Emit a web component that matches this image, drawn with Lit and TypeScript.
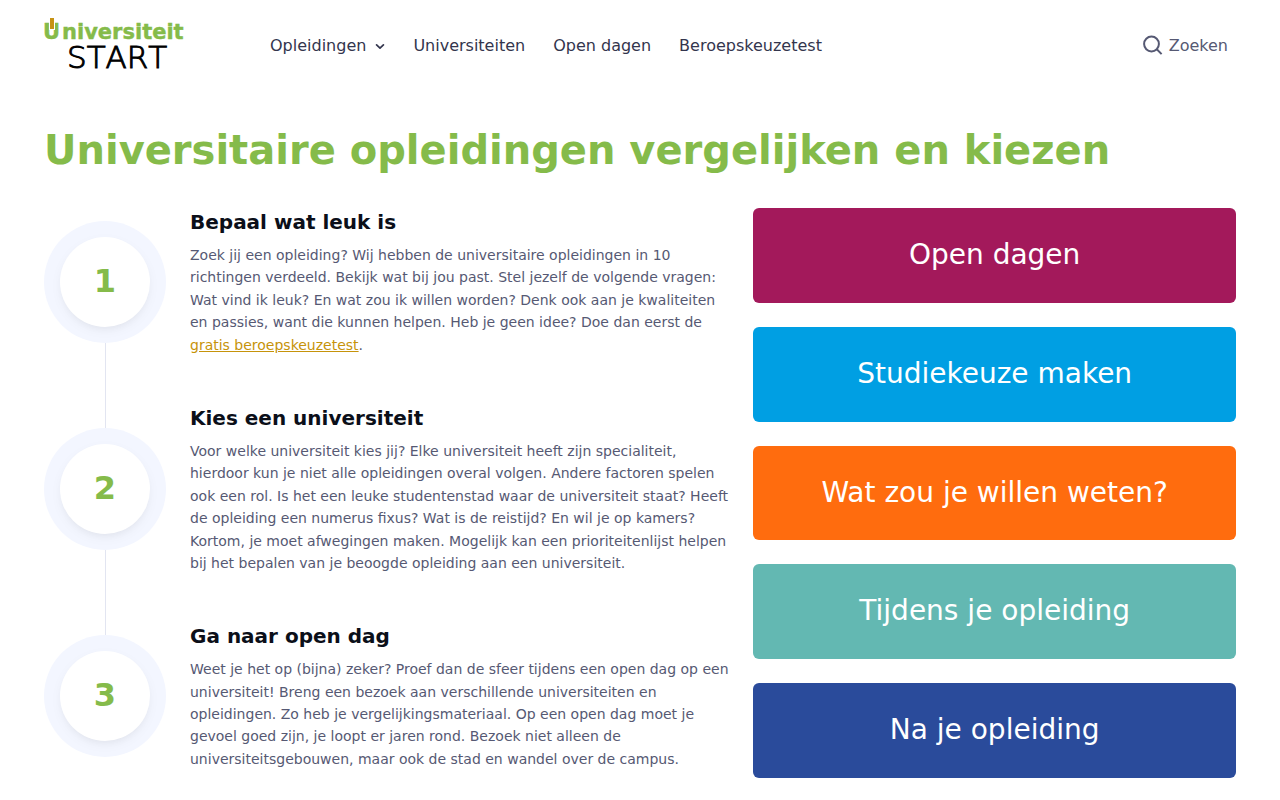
import { LitElement, html, css } from "lit";
import { customElement } from "lit/decorators.js";

const tiles = [
  { label: "Open dagen", tone: "plum" },
  { label: "Studiekeuze maken", tone: "sky" },
  { label: "Wat zou je willen weten?", tone: "orange" },
  { label: "Tijdens je opleiding", tone: "teal" },
  { label: "Na je opleiding", tone: "navy" },
];

const steps = [
  {
    title: "Bepaal wat leuk is",
    body: html`Zoek jij een opleiding? Wij hebben de universitaire opleidingen in 10 richtingen verdeeld. Bekijk wat bij jou past. Stel jezelf de volgende vragen: Wat vind ik leuk? En wat zou ik willen worden? Denk ook aan je kwaliteiten en passies, want die kunnen helpen. Heb je geen idee? Doe dan eerst de <a class="text-link" href="#beroepskeuzetest">gratis beroepskeuzetest</a>.`,
  },
  {
    title: "Kies een universiteit",
    body: html`Voor welke universiteit kies jij? Elke universiteit heeft zijn specialiteit, hierdoor kun je niet alle opleidingen overal volgen. Andere factoren spelen ook een rol. Is het een leuke studentenstad waar de universiteit staat? Heeft de opleiding een numerus fixus? Wat is de reistijd? En wil je op kamers? Kortom, je moet afwegingen maken. Mogelijk kan een prioriteitenlijst helpen bij het bepalen van je beoogde opleiding aan een universiteit.`,
  },
  {
    title: "Ga naar open dag",
    body: html`Weet je het op (bijna) zeker? Proef dan de sfeer tijdens een open dag op een universiteit! Breng een bezoek aan verschillende universiteiten en opleidingen. Zo heb je vergelijkingsmateriaal. Op een open dag moet je gevoel goed zijn, je loopt er jaren rond. Bezoek niet alleen de universiteitsgebouwen, maar ook de stad en wandel over de campus.`,
  },
];

@customElement("app-root")
export class AppRoot extends LitElement {
  static styles = css`
    :host {
      display: block;
      background: #fff;
      color: #565973;
      font-family: "DejaVu Sans", sans-serif;
      font-size: 16px;
      line-height: 1.6;
    }
    * {
      box-sizing: border-box;
    }
    a {
      color: inherit;
      text-decoration: none;
    }
    h1,
    h2,
    p,
    ol,
    ul {
      margin: 0;
      padding: 0;
    }
    ol,
    ul {
      list-style: none;
    }
    .container {
      max-width: 1240px;
      margin: 0 auto;
      padding: 0 24px;
    }
    .header {
      display: flex;
      align-items: center;
      min-height: 91px;
    }
    .logo {
      display: block;
      width: 142px;
      height: 55px;
    }
    .logo svg {
      display: block;
      width: 100%;
      height: 100%;
      overflow: visible;
    }
    .logo-name {
      font-size: 21px;
      font-weight: 700;
      fill: #85bb4a;
      stroke: #85bb4a;
      stroke-width: 0.4;
    }
    .logo-start {
      font-size: 31px;
      font-family: "DejaVu Sans Light", "DejaVu Sans", sans-serif;
      font-weight: 200;
      font-kerning: none;
      fill: #000;
      stroke: #000;
      stroke-width: 1;
    }
    .nav {
      display: flex;
      flex: 1;
      gap: 28px;
      margin-left: 84px;
      color: #33354d;
    }
    .nav-link,
    .search {
      display: flex;
      align-items: center;
    }
    .chevron {
      width: 10px;
      height: 6px;
      margin-left: 9px;
    }
    .search {
      gap: 6px;
      margin-right: 8px;
      padding: 0;
      border: 0;
      background: none;
      color: #565973;
      font: inherit;
    }
    .search svg {
      width: 20px;
      height: 20px;
      overflow: visible;
    }
    .title {
      margin: 33px 0 32px;
      color: #85bb4a;
      font-size: 40px;
      font-weight: 700;
      line-height: 1.3;
    }
    .content {
      display: grid;
      grid-template-columns: repeat(12, minmax(0, 1fr));
      gap: 24px;
      align-items: start;
    }
    .steps {
      grid-column: span 7;
      margin-top: -24px;
    }
    .step {
      display: grid;
      grid-template-columns: 122px 1fr;
      column-gap: 24px;
    }
    .rail {
      display: flex;
      flex-direction: column;
      align-items: center;
    }
    .rail::before,
    .rail::after {
      content: "";
      flex: 1;
      width: 1px;
      background: #e2e5f1;
    }
    .step:first-child .rail::before,
    .step:last-child .rail::after {
      background: none;
    }
    .ring {
      padding: 16px;
      border-radius: 50%;
      background: #f3f6ff;
    }
    .number {
      display: flex;
      align-items: center;
      justify-content: center;
      width: 90px;
      height: 90px;
      border-radius: 50%;
      background: #fff;
      box-shadow: 0 4px 8px -4px rgba(11, 15, 25, 0.06), 0 4px 12px rgba(11, 15, 25, 0.04);
      color: #85bb4a;
      font-size: 32px;
      font-weight: 700;
      line-height: 1.3;
    }
    .step-body {
      padding: 24px 0;
    }
    .step-title {
      margin-bottom: 8px;
      color: #0b0f19;
      font-size: 20px;
      font-weight: 700;
      line-height: 1.4;
    }
    .step-text {
      font-size: 14px;
    }
    .text-link {
      color: #c6930a;
      text-decoration: underline;
    }
    .tiles {
      display: grid;
      grid-column: span 5;
      gap: 24px;
    }
    .tile {
      display: block;
      padding: 25px;
      border-radius: 6px;
      color: #fff;
      font-size: 28px;
      text-align: center;
    }
    .plum {
      background: #a3195b;
    }
    .sky {
      background: #009fe3;
    }
    .orange {
      background: #ff6c0e;
    }
    .teal {
      background: #63b8b2;
    }
    .navy {
      background: #2a4b9b;
    }
    @media (max-width: 900px) {
      .header {
        flex-wrap: wrap;
        gap: 16px;
      }
      .nav {
        flex-wrap: wrap;
        margin-left: 0;
      }
      .steps,
      .tiles {
        grid-column: span 12;
      }
    }
  `;

  render() {
    return html`
      <div class="container">
        <header class="header">
          <a class="logo" href="#home" aria-label="Universiteit Start">
            <svg viewBox="0 0 142 55" aria-hidden="true">
              <text class="logo-name" y="21"><tspan x="-1">U</tspan><tspan x="18">niversiteit</tspan></text>
              <rect x="5" y="0" width="6" height="12" fill="#fff" />
              <rect x="6" y="0" width="4" height="11" fill="#c69214" />
              <text class="logo-start" x="23" y="50">START</text>
            </svg>
          </a>
          <nav class="nav" aria-label="Hoofdmenu">
            <a class="nav-link" href="#opleidingen">
              Opleidingen
              <svg class="chevron" viewBox="0 0 10 6" fill="none" stroke="currentColor" stroke-width="1.7" stroke-linecap="round" stroke-linejoin="round" aria-hidden="true">
                <path d="M1.6 1.9 5 5.1 8.4 1.9" />
              </svg>
            </a>
            <a class="nav-link" href="#universiteiten">Universiteiten</a>
            <a class="nav-link" href="#open-dagen">Open dagen</a>
            <a class="nav-link" href="#beroepskeuzetest">Beroepskeuzetest</a>
          </nav>
          <button class="search" type="button">
            <svg viewBox="0 0 20 20" fill="none" stroke="currentColor" stroke-width="2" aria-hidden="true">
              <circle cx="8.5" cy="8" r="7.4" />
              <path d="m13.8 13.3 4.8 4.8" />
            </svg>
            Zoeken
          </button>
        </header>
        <main>
          <h1 class="title">Universitaire opleidingen vergelijken en kiezen</h1>
          <div class="content">
            <ol class="steps">
              ${steps.map(
                (step, i) => html`
                  <li class="step">
                    <div class="rail">
                      <div class="ring"><div class="number">${i + 1}</div></div>
                    </div>
                    <div class="step-body">
                      <h2 class="step-title">${step.title}</h2>
                      <p class="step-text">${step.body}</p>
                    </div>
                  </li>
                `
              )}
            </ol>
            <ul class="tiles">
              ${tiles.map((t) => html`<li><a class="tile ${t.tone}" href="#${t.tone}">${t.label}</a></li>`)}
            </ul>
          </div>
        </main>
      </div>
    `;
  }
}
